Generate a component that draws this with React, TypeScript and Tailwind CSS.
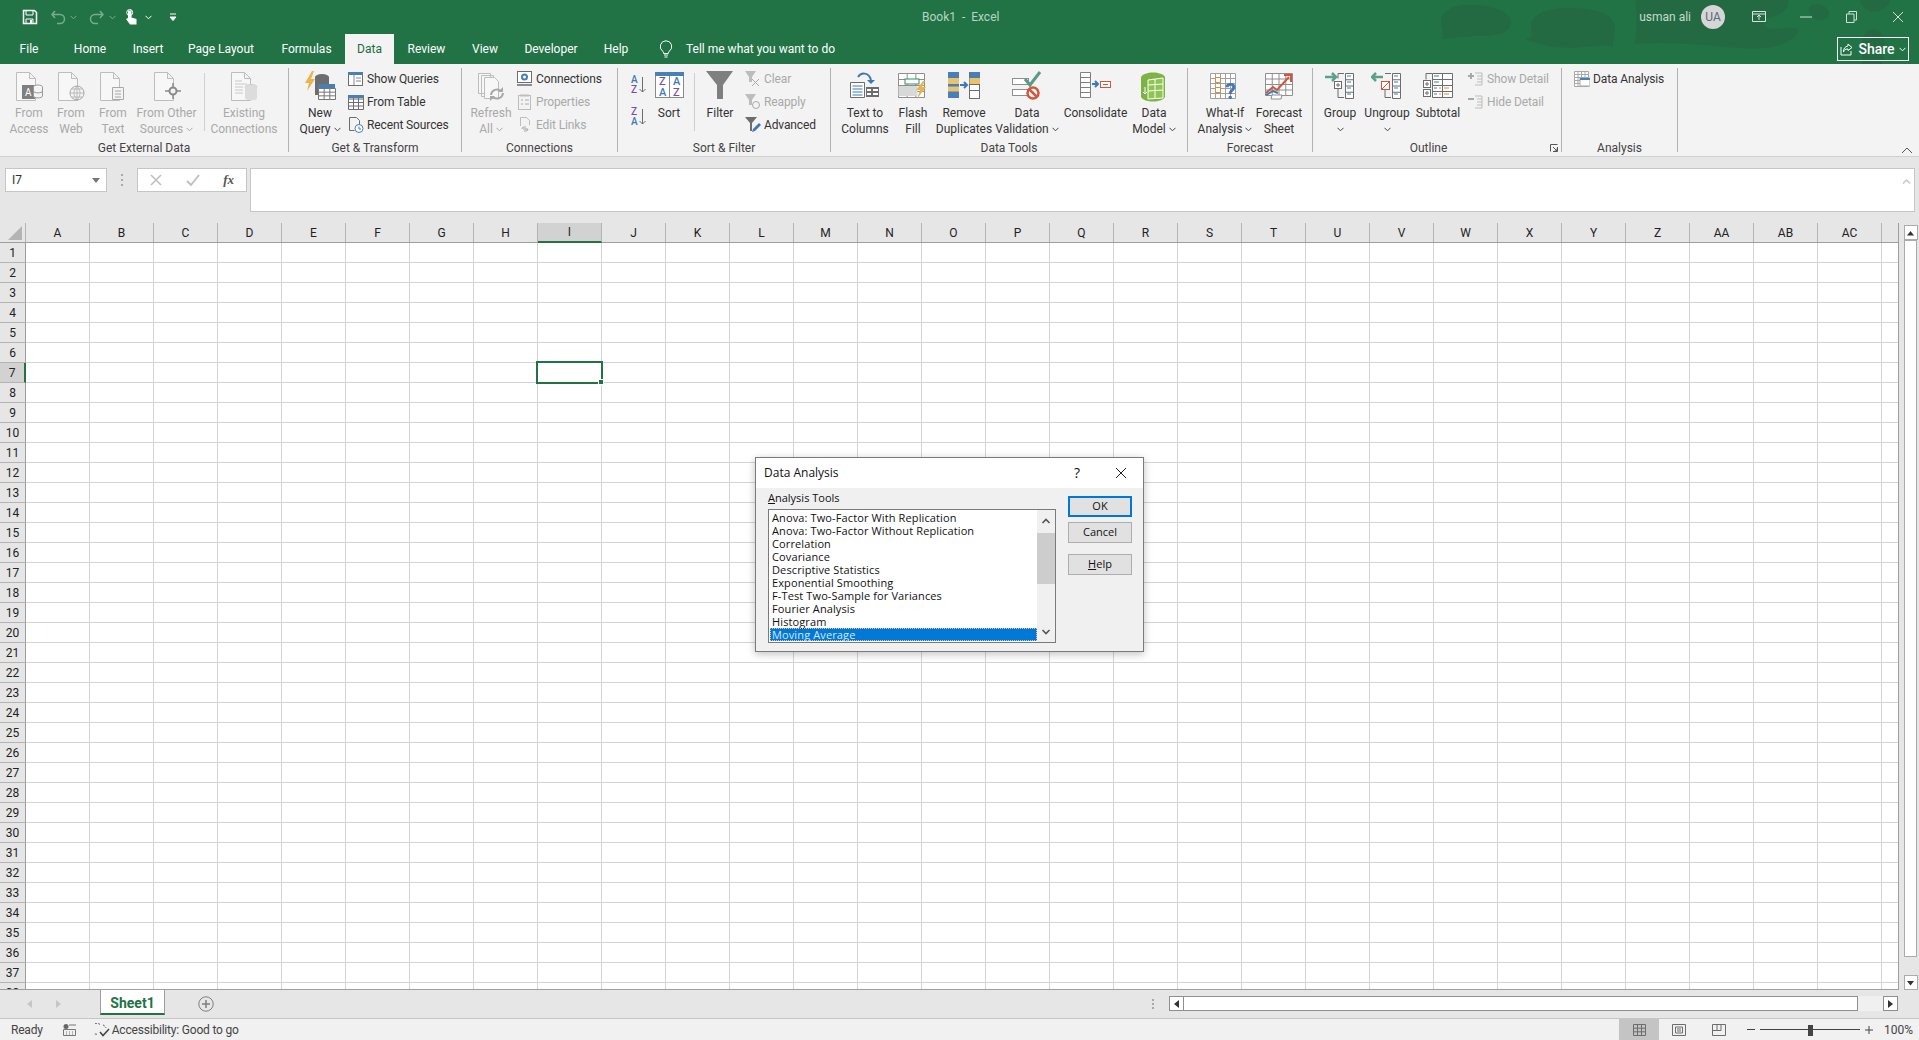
import React from "react";

const GRAY = "#bdbdbd";
const DARK = "#6d6d6d";

const columns = "A B C D E F G H I J K L M N O P Q R S T U V W X Y Z AA AB AC".split(" ");
const rows = Array.from({ length: 38 }, (_, i) => i + 1);
const tools = [
  "Anova: Two-Factor With Replication",
  "Anova: Two-Factor Without Replication",
  "Correlation",
  "Covariance",
  "Descriptive Statistics",
  "Exponential Smoothing",
  "F-Test Two-Sample for Variances",
  "Fourier Analysis",
  "Histogram",
  "Moving Average",
];

function Chev({ color = "#444444" }: { color?: string }) {
  return (
    <svg width="7" height="5" viewBox="0 0 7 5" className="inline-block">
      <path d="M0.5 0.8 3.5 3.8 6.5 0.8" fill="none" stroke={color} strokeWidth="1" />
    </svg>
  );
}

function Icon({ children, size = 32 }: { children: React.ReactNode; size?: number }) {
  return (
    <svg width={size} height={size} viewBox={`0 0 ${size} ${size}`} className="shrink-0" fill="none">
      {children}
    </svg>
  );
}

function Doc({ c = GRAY }: { c?: string }) {
  return <path d="M3.5 1.5h13l6 6v22h-19zM16.5 1.5v6h6" stroke={c} fill="#f7f7f7" />;
}

function BigButton({
  icon,
  label,
  w,
  off,
  chev,
  chevAlone,
}: {
  icon: React.ReactNode;
  label: string[];
  w: number;
  off?: boolean;
  chev?: boolean;
  chevAlone?: boolean;
}) {
  const color = off ? "text-[#a9a9a9]" : "text-[#333333]";
  return (
    <div className={`flex flex-col items-center whitespace-nowrap text-xs leading-4 ${color}`} style={{ width: w }}>
      <div className="flex h-[38px] items-start justify-center pt-[4px]">{icon}</div>
      {label.map((line, i) => (
        <div key={line} className="flex items-center gap-[3px]">
          {line}
          {chev && i === label.length - 1 && <Chev color={off ? "#a9a9a9" : "#444444"} />}
        </div>
      ))}
      {chevAlone && (
        <div className="flex h-4 items-center">
          <Chev />
        </div>
      )}
    </div>
  );
}

function SmallButton({ icon, label, off }: { icon: React.ReactNode; label: string; off?: boolean }) {
  return (
    <div className={`flex h-[23px] items-center whitespace-nowrap text-xs tracking-[-0.12px] ${off ? "text-[#a9a9a9]" : "text-[#333333]"}`}>
      <div className="w-[19px]">{icon}</div>
      {label}
    </div>
  );
}

function Group({
  title,
  w,
  children,
  extra,
}: {
  title: string;
  w: number;
  children: React.ReactNode;
  extra?: React.ReactNode;
}) {
  return (
    <div className="relative mt-1 flex h-[84px] shrink-0 flex-col border-r border-[#b3b3b3]" style={{ width: w }}>
      <div className="-mt-px flex h-[73px]">{children}</div>
      <div className={`h-3 text-center text-xs leading-4 text-[#444444] ${extra ? "pr-[17px]" : ""}`}>{title}</div>
      {extra}
    </div>
  );
}

function ThinSep({ ml, mr }: { ml: string; mr: string }) {
  return <div className={`${ml} ${mr} mt-[6px] h-[58px] w-px bg-[#d0d0d0]`} />;
}

const TabNames: [string, number][] = [
  ["File", 58],
  ["Home", 64],
  ["Insert", 52],
  ["Page Layout", 94],
  ["Formulas", 77],
  ["Data", 49],
  ["Review", 65],
  ["View", 52],
  ["Developer", 80],
  ["Help", 50],
];

function TitleBar() {
  return (
    <div className="relative h-16 bg-[#217346] text-white">
      <svg width="519" height="64" viewBox="0 0 519 64" className="absolute right-0 top-0" fill="#236a42">
        <path d="M41 22c0-12 14-18 32-17 18 0 38 6 38 17s-14 14-30 14c-14 0-24 1-40 3 4-4 0-10 0-17z" />
        <path d="M131 26c0-10 12-18 38-18s46 6 46 20c0 8-2 12-2 19-10-3-20-1-38 1-16 0-32-2-50-9 10-1 6-6 6-13z" />
        <path d="M236 0h152c2 10-8 16-22 18-4 10-4 12 30 10 6 2 0 14-24 19-30 6-80-8-138-3 4-8 2-24 2-44z" />
        <path d="M410 6c6-4 14-2 18 4s-2 10-8 10-14-8-10-14zM460 0h30c-2 10-16 14-22 10-4-2-8-6-8-10zM462 40c4-14 18-14 22-2 2 6 0 18-2 26h-20z" />
      </svg>
      <div className="relative flex h-[34px] items-center">
        <div className="ml-[22px] flex items-center">
          <Icon size={16}>
            <path d="M1.500 1.500h11l2 2v11h-13z" stroke="#fff" strokeWidth="1.500" />
            <path d="M4 2v4h7V2M4 15v-5h7v5" stroke="#fff" />
            <rect x="8" y="11" width="2" height="3" fill="#fff" />
          </Icon>
          <div className="ml-3 flex items-center gap-1 opacity-40">
            <Icon size={16}>
              <path d="M5 2 2 5.500 5 9M2.500 5.500H10a4 4 0 0 1 0 9H7" stroke="#fff" strokeWidth="1.500" />
            </Icon>
            <Chev color="#fff" />
          </div>
          <div className="ml-3 flex items-center gap-1 opacity-40">
            <Icon size={16}>
              <path d="M11 2l3 3.500L11 9M13.500 5.500H6a4 4 0 0 0 0 9h3" stroke="#fff" strokeWidth="1.500" />
            </Icon>
            <Chev color="#fff" />
          </div>
          <div className="ml-2 flex items-center gap-[5px]">
            <Icon size={16}>
              <path d="M4 1.500h3.500v7l5 1.500v5.500H6L2 10l2-1z" fill="#fff" />
              <circle cx="5.700" cy="3.500" r="3" stroke="#fff" />
            </Icon>
            <Chev color="#fff" />
          </div>
          <svg width="8" height="8" viewBox="0 0 8 8" className="ml-[17px]">
            <path d="M1 1h6M1 4h6L4 7.500z" stroke="#fff" fill="#fff" strokeWidth="1" />
          </svg>
        </div>
        <div className="absolute left-[922px] top-[9px] whitespace-pre text-xs text-[#b6d5c4]">Book1  -  Excel</div>
        <div className="absolute right-[228px] top-[9px] text-xs text-[#c3dccf]">usman ali</div>
        <div className="absolute left-[1701px] top-[5px] flex h-6 w-6 items-center justify-center rounded-full bg-[#d6d6d6] text-xs text-[#5a6a7a]">
          UA
        </div>
        <div className="ml-auto flex items-center">
          <svg width="14" height="12" viewBox="0 0 14 12" fill="none" className="mr-[34px]">
            <path d="M.5.5h13v10H.5zM.5 3h13M7 9V4.500M5 6l2-2 2 2" stroke="#d7e6dd" />
          </svg>
          <svg width="12" height="2" viewBox="0 0 12 2" className="mr-[34px]">
            <path d="M0 1h12" stroke="#cfe0d6" />
          </svg>
          <svg width="11" height="12" viewBox="0 0 11 12" fill="none" className="mr-[35px]">
            <path d="M.5 3h7.500v8.500H.5zM3 3V.5h7.500V9H8" stroke="#cfe0d6" />
          </svg>
          <svg width="12" height="12" viewBox="0 0 12 12" className="mr-[15px]">
            <path d="M1 1l10 10M11 1 1 11" stroke="#cfe0d6" />
          </svg>
        </div>
      </div>
      <div className="relative flex h-[30px] items-stretch text-xs">
        {TabNames.map(([name, w]) => (
          <div
            key={name}
            style={{ width: w }}
            className={`flex items-center justify-center ${name === "Data" ? "bg-[#f3f3f3] text-[#1e6b41]" : "text-white"}`}
          >
            {name}
          </div>
        ))}
        <svg width="14" height="18" viewBox="0 0 14 18" fill="none" className="ml-[18px] mt-[6px]">
          <path d="M7 .8a5.700 5.700 0 0 0-3.400 10.300c.8.8 1 1.400 1 2.400h4.800c0-1 .2-1.600 1-2.400A5.700 5.700 0 0 0 7 .8zM5 15h4M5.500 17h3" stroke="#fff" />
        </svg>
        <div className="ml-[13px] flex items-center text-white">Tell me what you want to do</div>
        <div className="absolute right-[10px] top-[3px] flex h-6 w-[72px] items-center justify-center gap-1 border border-white text-sm font-medium">
          <svg width="14" height="14" viewBox="0 0 14 14" fill="none">
            <path d="M8 2l4 3.500L8 8.500V7C5 7 4 8 3.500 10 3.500 6.500 5 4.500 8 4zM1 5v8h10V9" stroke="#fff" />
          </svg>
          Share
          <Chev color="#fff" />
        </div>
      </div>
    </div>
  );
}

function GridSheet({ c = GRAY, x = 0, y = 0, w = 24, h = 24, cols = 4, rws = 4 }: any) {
  const lines: string[] = [`M${x + 0.5} ${y + 0.5}h${w}v${h}h-${w}z`];
  for (let i = 1; i < cols; i++) lines.push(`M${x + 0.5 + (w * i) / cols} ${y}v${h}`);
  for (let i = 1; i < rws; i++) lines.push(`M${x} ${y + 0.5 + (h * i) / rws}h${w}`);
  return <path d={lines.join("")} stroke={c} fill="#fff" />;
}

function SortSmall({ top, bottom, mt }: { top: string; bottom: string; mt: string }) {
  const a = top === "A" ? "#3f78b8" : "#7a4bb0";
  const b = top === "A" ? "#7a4bb0" : "#3f78b8";
  return (
    <svg width="16" height="22" viewBox="0 0 16 22" className={`${mt} ml-[3px]`} fontFamily="Roboto" fontSize="10" fontWeight="500">
      <text x="0" y="9" fill={a}>{top}</text>
      <text x="0" y="19" fill={b}>{bottom}</text>
      <path d="M11.500 3v15M8.500 15l3 3 3-3" stroke={DARK} fill="none" />
    </svg>
  );
}

function Ribbon() {
  return (
    <div className="relative flex h-[93px] border-b border-[#d0d0d0] bg-[#f3f3f3]">
      <Group title="Get External Data" w={289}>
        <div className="ml-2 flex">
          <BigButton
            w={42}
            off
            label={["From", "Access"]}
            icon={
              <Icon>
                <Doc />
                <rect x="9" y="14" width="13" height="14" fill="#7f7f7f" />
                <text x="12" y="25" fontSize="10" fontFamily="Roboto" fill="#fff">A</text>
                <ellipse cx="25" cy="16" rx="4.500" ry="2" fill="#fff" stroke="#999" />
                <path d="M20.500 16v9c0 2.500 9 2.500 9 0v-9M20.500 20c0 2.500 9 2.500 9 0" stroke="#999" fill="#f3f3f3" />
              </Icon>
            }
          />
          <BigButton
            w={42}
            off
            label={["From", "Web"]}
            icon={
              <Icon>
                <Doc />
                <circle cx="22" cy="22" r="7" stroke="#a8a8a8" fill="#f3f3f3" />
                <path d="M15 22h14M22 15v14M17 18h10M17 26h10M22 15c-4 4-4 10 0 14M22 15c4 4 4 10 0 14" stroke="#a8a8a8" strokeWidth=".7" />
              </Icon>
            }
          />
          <BigButton
            w={42}
            off
            label={["From", "Text"]}
            icon={
              <Icon>
                <Doc />
                <path d="M15.500 16.500h11v12h-11zM18 20h6M18 23h6M18 26h6" stroke="#a8a8a8" fill="#f3f3f3" />
              </Icon>
            }
          />
          <BigButton
            w={65}
            off
            chev
            label={["From Other", "Sources"]}
            icon={
              <Icon>
                <Doc />
                <circle cx="22" cy="20" r="3.500" stroke="#8a8a8a" strokeWidth="2" fill="#f3f3f3" />
                <path d="M22 12v4M22 24v4M14 20h4M26 20h4" stroke="#8a8a8a" strokeWidth="1.500" />
              </Icon>
            }
          />
          <ThinSep ml="ml-[5px]" mr="mr-1" />
          <BigButton
            w={70}
            off
            label={["Existing", "Connections"]}
            icon={
              <Icon>
                <Doc />
                <path d="M7 10h7M7 13h12M7 16h8M7 19h8M7 22h8" stroke="#c8c8c8" />
                <ellipse cx="23" cy="16" rx="6" ry="2.500" fill="#dcdcdc" stroke="#cfcfcf" />
                <path d="M17 16v11c0 3 12 3 12 0V16z" fill="#dcdcdc" />
              </Icon>
            }
          />
        </div>
      </Group>
      <Group title="Get & Transform" w={173}>
        <div className="ml-[7px] flex">
          <BigButton
            w={48}
            chev
            label={["New", "Query"]}
            icon={
              <Icon>
                <path d="M8 0 1 12h4L3 20l8-12H7l3-8z" fill="#eab34e" />
                <ellipse cx="18" cy="6" rx="7" ry="3" fill="#6d6d6d" />
                <path d="M11 6v18h14V6z" fill="#6d6d6d" />
                <rect x="14" y="13" width="17" height="15" fill="#4a7fb5" />
                <GridSheet c="#777" x={14} y={17} w={17} h={11} cols={3} rws={3} />
              </Icon>
            }
          />
          <div className="ml-1 flex flex-col">
            <SmallButton
              label="Show Queries"
              icon={
                <Icon size={16}>
                  <rect x=".5" y="1.500" width="14" height="13" stroke="#6d6d6d" fill="#fff" />
                  <rect x="0" y="1" width="15" height="3" fill="#4a7fb5" />
                  <path d="M6 4v10M8 7h5M8 10h5" stroke="#888" />
                </Icon>
              }
            />
            <SmallButton
              label="From Table"
              icon={
                <Icon size={16}>
                  <GridSheet c="#6d6d6d" x={0} y={1} w={15} h={14} cols={3} rws={4} />
                  <rect x="0" y="1" width="15.500" height="3" fill="#4a7fb5" />
                </Icon>
              }
            />
            <SmallButton
              label="Recent Sources"
              icon={
                <Icon size={16}>
                  <path d="M1.500.5h7l3 3v5M1.500.5v13h5" stroke="#6d6d6d" />
                  <circle cx="11" cy="11.500" r="4" fill="#fff" stroke="#4a7fb5" />
                  <path d="M11 9.500v2.500h2" stroke="#4a7fb5" />
                </Icon>
              }
            />
          </div>
        </div>
      </Group>
      <Group title="Connections" w={156}>
        <div className="ml-2 flex">
          <BigButton
            w={42}
            off
            chev
            label={["Refresh", "All"]}
            icon={
              <Icon>
                <path d="M3.500 2.500h12v20h-12zM6.500 4.500h12v21h-12z" stroke={GRAY} fill="#f7f7f7" />
                <path d="M9.500 6.500h10l4 4v17h-14z" stroke={GRAY} fill="#f7f7f7" />
                <path d="M16 24a6 6 0 0 1 10-4M28 22a6 6 0 0 1-10 4" stroke="#a8a8a8" strokeWidth="2" />
                <path d="M28 16v5h-5zM15 30v-5h5z" fill="#a8a8a8" />
              </Icon>
            }
          />
          <div className="ml-[5px] flex flex-col">
            <SmallButton
              label="Connections"
              icon={
                <Icon size={16}>
                  <rect x=".5" y=".5" width="14" height="11" stroke="#6d6d6d" fill="#fff" />
                  <path d="M0 14h15" stroke="#6d6d6d" strokeWidth="1.500" />
                  <circle cx="7.500" cy="6" r="2.500" stroke="#4a7fb5" strokeWidth="2" />
                </Icon>
              }
            />
            <SmallButton
              off
              label="Properties"
              icon={
                <Icon size={16}>
                  <rect x="1.500" y="1.500" width="12" height="14" stroke={GRAY} />
                  <path d="M3 1.500h9" stroke={GRAY} strokeWidth="2" />
                  <path d="M4 6h2M8 6h4M4 10h2M8 10h4" stroke="#a8a8a8" />
                </Icon>
              }
            />
            <SmallButton
              off
              label="Edit Links"
              icon={
                <Icon size={16}>
                  <path d="M3.500 9V.5h6l3 3V8" stroke={GRAY} />
                  <path d="M5 12a2 2 0 0 1 2-2h2M11 12a2 2 0 0 1-2 2H7M8 12h3M6 12h3" stroke="#a8a8a8" />
                </Icon>
              }
            />
          </div>
        </div>
      </Group>
      <Group title="Sort & Filter" w={213}>
        <div className="ml-[10px] flex">
          <div className="flex w-6 flex-col">
            <SortSmall mt="mt-[7px]" top="A" bottom="Z" />
            <div className="h-[5px]" />
            <SortSmall mt="mt-[5px]" top="Z" bottom="A" />
          </div>
          <BigButton
            w={34}
            label={["Sort"]}
            icon={
              <svg width="29" height="28" viewBox="0 0 29 28" fontFamily="Roboto" fontSize="11" fontWeight="500">
                <rect x=".5" y="1.500" width="28" height="25" stroke="#8a8a8a" fill="#fff" />
                <rect x="0" y="1" width="29" height="4" fill="#4a7fb5" />
                <path d="M14.500 5v21" stroke="#8a8a8a" />
                <text x="4" y="14" fill="#7a4bb0">Z</text>
                <text x="4" y="25" fill="#3f78b8">A</text>
                <text x="18" y="14" fill="#3f78b8">A</text>
                <text x="18" y="25" fill="#7a4bb0">Z</text>
              </svg>
            }
          />
          <ThinSep ml="ml-2" mr="mr-[9px]" />
          <BigButton
            w={32}
            label={["Filter"]}
            icon={
              <svg width="28" height="28" viewBox="0 0 28 28">
                <path d="M0 0h27L17 14v14h-6V14z" fill="#7f7f7f" />
              </svg>
            }
          />
          <div className="ml-[9px] flex flex-col">
            <SmallButton
              off
              label="Clear"
              icon={
                <Icon size={16}>
                  <path d="M0 0h11L7 6v5H4V6z" fill="#bdbdbd" />
                  <path d="M7 8l7 7M14 8l-7 7" stroke="#a8a8a8" />
                </Icon>
              }
            />
            <SmallButton
              off
              label="Reapply"
              icon={
                <Icon size={16}>
                  <path d="M0 0h11L7 6v5H4V6z" fill="#bdbdbd" />
                  <circle cx="11" cy="11" r="3.500" stroke="#a8a8a8" />
                </Icon>
              }
            />
            <SmallButton
              label="Advanced"
              icon={
                <Icon size={16}>
                  <path d="M0 0h12L7 6v8H5V6z" fill="#6d6d6d" />
                  <path d="M7 15l1-3 6-6 2 2-6 6z" fill="#3f78b8" />
                </Icon>
              }
            />
          </div>
        </div>
      </Group>
      <Group title="Data Tools" w={357}>
        <div className="ml-1 flex">
          <BigButton
            w={60}
            label={["Text to", "Columns"]}
            icon={
              <Icon>
                <path d="M1.500 11.500h14v15h-14z" stroke="#6d6d6d" fill="#fff" />
                <path d="M3.500 15h10M3.500 18h10M3.500 21h10M3.500 24h10" stroke="#3f78b8" />
                <rect x="17" y="16" width="13" height="10" fill="#6d6d6d" />
                <path d="M18 18h4v2h-4zM24 18h5v2h-5zM18 22h4v2h-4zM24 22h5v2h-5z" fill="#fff" />
                <path d="M9 6c3-5 11-5 13 3" stroke="#3f78b8" strokeWidth="2" />
                <path d="M18 9h8l-4 4z" fill="#3f78b8" />
              </Icon>
            }
          />
          <BigButton
            w={36}
            label={["Flash", "Fill"]}
            icon={
              <Icon>
                <GridSheet c="#8f8f8f" x={1} y={2} w={26} h={24} cols={3} rws={4} />
                <rect x="8" y="8" width="14" height="5" fill="#fff" stroke="#2f8f5e" />
                <rect x="1.500" y="15" width="19" height="10" fill="#d8d8d8" />
                <path d="M26 10l-7 9h4l-3 9 9-12h-4l3-6z" fill="#eab34e" />
              </Icon>
            }
          />
          <BigButton
            w={66}
            label={["Remove", "Duplicates"]}
            icon={
              <Icon>
                <rect x="0" y="1" width="11" height="26" fill="#4a7fb5" />
                <rect x="0" y="7" width="11" height="6" fill="#e9c26f" />
                <rect x="0" y="15.500" width="11" height="5" fill="#e9c26f" />
                <rect x="21.500" y="1.500" width="10" height="26" fill="#fff" stroke="#6d6d6d" />
                <rect x="21.500" y="1" width="10.500" height="6" fill="#4a7fb5" />
                <rect x="21.500" y="7" width="10.500" height="6" fill="#e9c26f" />
                <path d="M22 13.500h10M22 19.500h10" stroke="#6d6d6d" />
                <path d="M12 14h6M16 11l3 3-3 3" stroke="#3f78b8" strokeWidth="2" />
              </Icon>
            }
          />
          <BigButton
            w={60}
            chev
            label={["Data", "Validation"]}
            icon={
              <Icon>
                <rect x="1.500" y="7.500" width="16" height="6" stroke="#8f8f8f" fill="#fff" />
                <rect x="1.500" y="18.500" width="16" height="6" stroke="#8f8f8f" fill="#fff" />
                <path d="M14 8l5 6L29 1" stroke="#5a9a86" strokeWidth="3" />
                <circle cx="22" cy="22" r="5.500" stroke="#d1573c" strokeWidth="2.500" fill="#fff" />
                <path d="M18 18l8 8" stroke="#d1573c" strokeWidth="2.500" />
              </Icon>
            }
          />
          <BigButton
            w={77}
            label={["Consolidate"]}
            icon={
              <Icon>
                <GridSheet c="#7f7f7f" x={0} y={1} w={10} h={25} cols={1} rws={5} />
                <path d="M12 13h5M15 10l3 3-3 3" stroke="#3f78b8" strokeWidth="2" />
                <rect x="20.500" y="10.500" width="10" height="6" stroke="#d1573c" fill="#fff" />
                <path d="M23 13.500h5" stroke="#d1573c" />
              </Icon>
            }
          />
          <BigButton
            w={40}
            chev
            label={["Data", "Model"]}
            icon={
              <Icon>
                <path d="M3 6c3-6 21-6 24 0v20c-3 6-21 6-24 0z" fill="#7cb342" />
                <path d="M10 9l15-2v20l-15 1z" fill="#8ec450" stroke="#fff" />
                <path d="M17 8v20M10 14l15-1M10 20l15-1" stroke="#fff" />
                <path d="M7 16v7M5 21l2 2 2-2" stroke="#fff" />
              </Icon>
            }
          />
        </div>
      </Group>
      <Group title="Forecast" w={125}>
        <div className="ml-2 flex">
          <BigButton
            w={58}
            chev
            label={["What-If", "Analysis"]}
            icon={
              <Icon>
                <GridSheet c="#a0a0a0" x={1} y={2} w={25} h={25} cols={5} rws={5} />
                <rect x="6.500" y="6.500" width="5" height="5" fill="#fff" stroke="#e08a3a" />
                <rect x="6.500" y="16.500" width="5" height="5" fill="#fff" stroke="#e08a3a" />
                <text x="16" y="28" fontSize="22" fontWeight="700" fontFamily="Roboto" fill="#3f78b8">?</text>
              </Icon>
            }
          />
          <BigButton
            w={50}
            label={["Forecast", "Sheet"]}
            icon={
              <Icon>
                <GridSheet c="#8f8f8f" x={2} y={2} w={27} h={22} cols={4} rws={4} />
                <path d="M3 22l7-6 4 3 12-13" stroke="#d1573c" strokeWidth="2" />
                <path d="M21 4h7v7" stroke="#d1573c" strokeWidth="2" />
                <path d="M3 24l7-4 5 2" stroke="#3f78b8" strokeWidth="2" />
                <path d="M9 24h10l-1 4H8z" fill="#fff" stroke="#8f8f8f" />
              </Icon>
            }
          />
        </div>
      </Group>
      <Group
        title="Outline"
        w={249}
        extra={
          <svg width="8" height="8" viewBox="0 0 8 8" fill="none" className="absolute bottom-0 right-[3px]">
            <path d="M.5 7.500v-7h7M7.500 3v4.500H3M3 3l4 4M4.500 7H7V4.500" stroke="#555" />
          </svg>
        }
      >
        <div className="ml-[5px] flex">
          <BigButton
            w={44}
            chevAlone
            label={["Group"]}
            icon={
              <Icon>
                <path d="M1 6h10M8 2l4 4-4 4" stroke="#5aa08c" strokeWidth="2.500" />
                <path d="M14 2.500h6M14 2.500v5M14 17v9.500h6" stroke="#6d6d6d" />
                <rect x="10.500" y="10.500" width="7" height="7" stroke="#6d6d6d" fill="#fff" />
                <path d="M12 14h4M14 12v4" stroke="#6d6d6d" />
                <GridSheet c="#6d6d6d" x={21} y={2} w={8} h={25} cols={1} rws={4} />
                <path d="M23 5h4M23 11h4M23 17h4M23 23h4" stroke="#3f78b8" />
              </Icon>
            }
          />
          <BigButton
            w={50}
            chevAlone
            label={["Ungroup"]}
            icon={
              <Icon>
                <path d="M12 6H2M5 2 1 6l4 4" stroke="#5aa08c" strokeWidth="2.500" />
                <path d="M14 2.500h6M14 17v9.500h6" stroke="#6d6d6d" />
                <rect x="10.500" y="10.500" width="8" height="8" stroke="#d1573c" fill="#fff" />
                <path d="M11 18l7-7" stroke="#d1573c" />
                <GridSheet c="#6d6d6d" x={21} y={2} w={8} h={25} cols={1} rws={4} />
                <path d="M23 5h4M23 11h4M23 17h4M23 23h4" stroke="#3f78b8" />
              </Icon>
            }
          />
          <BigButton
            w={52}
            label={["Subtotal"]}
            icon={
              <Icon>
                <path d="M4 2.500h6M4 2.500v6" stroke="#6d6d6d" />
                <rect x="1.500" y="9.500" width="7" height="7" stroke="#6d6d6d" fill="#fff" />
                <rect x="1.500" y="18.500" width="7" height="7" stroke="#6d6d6d" fill="#fff" />
                <path d="M3 13h4M5 11v4M3 22h4M5 20v4" stroke="#6d6d6d" />
                <GridSheet c="#6d6d6d" x={10} y={2} w={20} h={24} cols={2} rws={4} />
                <path d="M12 5h5M12 11h5M12 17h3M12 23h3" stroke="#3f78b8" />
                <path d="M22 17h5M22 23h5M17 17h2M17 23h2" stroke="#e08a3a" />
              </Icon>
            }
          />
          <div className="ml-1 flex flex-col">
            <SmallButton
              off
              label="Show Detail"
              icon={
                <Icon size={16}>
                  <path d="M0 5h6M3 2v6" stroke="#a8a8a8" strokeWidth="2" />
                  <path d="M7 2h7M9 5h5M9 8h5M9 11h5M7 14h7M14 2v12" stroke={GRAY} />
                </Icon>
              }
            />
            <SmallButton
              off
              label="Hide Detail"
              icon={
                <Icon size={16}>
                  <path d="M0 5h6" stroke="#a8a8a8" strokeWidth="2" />
                  <path d="M7 2h7M9 5h5M9 8h5M9 11h5M7 14h7M14 2v12" stroke={GRAY} />
                </Icon>
              }
            />
          </div>
        </div>
      </Group>
      <Group title="Analysis" w={116}>
        <div className="ml-3">
          <SmallButton
            label="Data Analysis"
            icon={
              <Icon size={16}>
                <GridSheet c="#a8a8a8" x={0} y={0} w={14} h={15} cols={4} rws={5} />
                <rect x="6" y="7" width="10" height="8" fill="#fff" stroke="#a8a8a8" />
                <rect x="6" y="7" width="10" height="2" fill="#4a7fb5" />
              </Icon>
            }
          />
        </div>
      </Group>
      <svg width="12" height="7" viewBox="0 0 12 7" fill="none" className="absolute right-[6px] top-[83px]">
        <path d="M1 6l5-5 5 5" stroke="#555" />
      </svg>
    </div>
  );
}

function FormulaBar() {
  return (
    <div className="flex h-[66px] items-start bg-[#e6e6e6] pl-[5px] pr-[4px] pt-[11px]">
      <div className="flex h-6 w-[102px] items-center justify-between border border-[#c6c6c6] bg-white pl-[6px] pr-[6px] text-xs text-[#333333]">
        I7
        <svg width="8" height="5" viewBox="0 0 8 5">
          <path d="M0 0h8L4 5z" fill="#777" />
        </svg>
      </div>
      <div className="flex h-6 w-[30px] items-center justify-center">
        <svg width="2" height="12" viewBox="0 0 2 12">
          <path d="M0 0h2v2H0zM0 5h2v2H0zM0 10h2v2H0z" fill="#a8a8a8" />
        </svg>
      </div>
      <div className="flex h-6 w-[110px] items-center justify-between border border-[#c6c6c6] bg-white px-3">
        <svg width="12" height="12" viewBox="0 0 12 12">
          <path d="M1 1l10 10M11 1 1 11" stroke="#bdbdbd" strokeWidth="1.500" />
        </svg>
        <svg width="14" height="12" viewBox="0 0 14 12" fill="none">
          <path d="M1 7l4 4 8-10" stroke="#bdbdbd" strokeWidth="1.800" />
        </svg>
        <span className="font-['Liberation_Serif',serif] text-[13px] font-bold italic text-[#555555]">fx</span>
      </div>
      <div className="relative ml-[3px] h-[44px] flex-1 border border-[#c6c6c6] bg-white">
        <svg width="9" height="7" viewBox="0 0 9 7" className="absolute right-[3px] top-[9px]">
          <path d="M1 5.500 4.500 2 8 5.500" fill="none" stroke="#c8c8c8" strokeWidth="1.500" />
        </svg>
      </div>
    </div>
  );
}

function ScrollBtn({ d }: { d: string }) {
  return (
    <div className="flex h-[15px] w-[14px] shrink-0 items-center justify-center border border-[#ababab] bg-white">
      <svg width="9" height="8" viewBox="0 0 9 8">
        <path d={d} fill="#333" />
      </svg>
    </div>
  );
}

function Sheet() {
  return (
    <div className="flex h-[767px] bg-[#e6e6e6]">
      <div className="relative flex w-[1899px] flex-col overflow-hidden border-b border-r border-[#9e9e9e] bg-white">
        <div className="flex h-5 shrink-0 border-b border-[#9e9e9e] bg-[#e6e6e6]">
          <div className="relative w-[26px] shrink-0 border-r border-[#b4b4b4]">
            <svg width="14" height="14" viewBox="0 0 14 14" className="absolute bottom-[2px] right-[3px]">
              <path d="M14 0v14H0z" fill="#b4b4b4" />
            </svg>
          </div>
          {columns.map((c) => (
            <div
              key={c}
              className={`flex w-16 shrink-0 items-center justify-center border-r border-[#b4b4b4] text-xs text-[#222222] ${
                c === "I" ? "h-[20px] border-b-2 border-b-[#217346] bg-[#d2d2d2]" : ""
              }`}
            >
              {c}
            </div>
          ))}
          <div className="w-16 shrink-0" />
        </div>
        {rows.map((r) => (
          <div key={r} className="flex h-5 shrink-0">
            <div
              className={`flex w-[26px] shrink-0 items-center justify-center border-b border-r pt-px text-xs text-[#222222] ${
                r === 7 ? "border-r-2 border-b-[#b4b4b4] border-r-[#217346] bg-[#d2d2d2]" : "border-b-[#b4b4b4] border-r-[#9e9e9e] bg-[#e6e6e6]"
              }`}
            >
              {r}
            </div>
            {columns.map((c) => (
              <div key={c} className="w-16 shrink-0 border-b border-r border-[#d4d4d4]" />
            ))}
            <div className="w-16 shrink-0 border-b border-[#d4d4d4]" />
          </div>
        ))}
        {/* active cell I7 */}
        <div className="absolute left-[536px] top-[138px] h-[23px] w-[67px] border-2 border-[#217346]">
          <div className="absolute -bottom-[3px] -right-[3px] h-[6px] w-[6px] border border-white bg-[#217346]" />
        </div>
      </div>
      <div className="flex w-5 flex-col items-center pl-[5px] pr-[2px] pt-[2px]">
        <ScrollBtn d="M1 6.500 4.500 2 8 6.500z" />
        <div className="h-[717px] w-full border border-[#ababab] bg-white" />
        <div className="flex-1" />
        <ScrollBtn d="M1 2h7L4.500 6.500z" />
      </div>
    </div>
  );
}

function Tabs() {
  return (
    <div className="flex h-7 items-stretch bg-[#e6e6e6]">
      <div className="flex w-[100px] items-center text-[#c0c0c0]">
        <svg width="5" height="8" viewBox="0 0 5 8" className="ml-[27px]">
          <path d="M5 0v8L0 4z" fill="#c6c6c6" />
        </svg>
        <svg width="5" height="8" viewBox="0 0 5 8" className="ml-[24px]">
          <path d="M0 0v8l5-4z" fill="#c6c6c6" />
        </svg>
      </div>
      <div className="mb-[3px] flex w-[65px] items-center justify-center border-x border-b-2 border-[#9e9e9e] border-b-[#217346] bg-white pt-[2px] text-sm font-bold text-[#217346]">
        Sheet1
      </div>
      <div className="ml-[33px] flex items-center">
        <svg width="16" height="16" viewBox="0 0 16 16" fill="none">
          <circle cx="8" cy="8" r="7.200" stroke="#7f7f7f" />
          <path d="M8 4v8M4 8h8" stroke="#7f7f7f" strokeWidth="1.500" />
        </svg>
      </div>
      <div className="ml-[938px] flex items-center">
        <svg width="2" height="10" viewBox="0 0 2 10">
          <path d="M0 0h2v2H0zM0 4h2v2H0zM0 8h2v2H0z" fill="#a8a8a8" />
        </svg>
      </div>
      <div className="ml-[15px] flex items-center pb-[1px]">
        <div className="flex h-[15px] w-[15px] items-center justify-center border border-[#8f8f8f] bg-white">
          <svg width="5" height="8" viewBox="0 0 5 8">
            <path d="M5 0v8L0 4z" fill="#333" />
          </svg>
        </div>
        <div className="h-[15px] w-[674px] border-y border-r border-[#8f8f8f] bg-white" />
        <div className="h-[15px] w-[25px] bg-[#f0f0f0]" />
        <div className="flex h-[15px] w-[15px] items-center justify-center border border-[#8f8f8f] bg-white">
          <svg width="5" height="8" viewBox="0 0 5 8">
            <path d="M0 0v8l5-4z" fill="#333" />
          </svg>
        </div>
      </div>
    </div>
  );
}

function StatusBar() {
  return (
    <div className="flex h-[22px] items-center border-t border-[#c6c6c6] bg-[#f1f1f1] text-xs text-[#444444]">
      <span className="ml-[11px] tracking-[-0.2px]">Ready</span>
      <svg width="13" height="12" viewBox="0 0 13 12" className="ml-[20px]">
        <circle cx="3" cy="2.500" r="2.500" fill="#666" />
        <path d="M6 1h7M.5 5.500h12v6H.5z" stroke="#777" fill="none" />
        <path d="M3 8h1M6 8h1M9 8h1M3 10h1M6 10h1M9 10h1" stroke="#777" />
      </svg>
      <svg width="16" height="14" viewBox="0 0 16 14" fill="none" className="ml-[18px]">
        <path d="M6 1.500A5.500 5.500 0 1 0 4 11M9 2a5 5 0 0 1 3 3" stroke="#555" strokeDasharray="2 1.200" />
        <path d="M6 9l3 3.500L15 6" stroke="#444" strokeWidth="1.500" />
      </svg>
      <span className="ml-[2px] tracking-[-0.2px]">Accessibility: Good to go</span>
      <div className="ml-auto flex h-full items-center">
        <div className="flex h-full w-10 items-center justify-center bg-[#c4c4c4]">
          <svg width="13" height="12" viewBox="0 0 13 12">
            <path d="M.5.500h12v11H.5zM4.500.5v11M8.500.5v11M.5 4.200h12M.5 7.800h12" stroke="#6d6d6d" fill="none" />
          </svg>
        </div>
        <div className="flex h-full w-10 items-center justify-center">
          <svg width="14" height="12" viewBox="0 0 14 12" fill="none">
            <path d="M.5.5h13v11H.5zM3.500 3h7v6h-7zM5 5h4M5 7h4" stroke="#6d6d6d" />
          </svg>
        </div>
        <div className="flex h-full w-10 items-center justify-center">
          <svg width="14" height="12" viewBox="0 0 14 12" fill="none">
            <path d="M.5.5h13v11H.5zM5 .5v6h4v-6M.5 6.500H5" stroke="#6d6d6d" />
          </svg>
        </div>
        <div className="ml-2 h-px w-2 bg-[#444444]" />
        <div className="relative ml-[5px] flex h-full w-[100px] items-center">
          <div className="h-px w-full bg-[#444444]" />
          <div className="absolute left-[48px] top-[6px] h-[11px] w-[5px] bg-[#444444]" />
        </div>
        <svg width="8" height="8" viewBox="0 0 8 8" className="ml-[5px]">
          <path d="M0 4h8M4 0v8" stroke="#444" />
        </svg>
        <span className="ml-[10px] mr-[6px] w-[30px] text-right">100%</span>
      </div>
    </div>
  );
}

function Dialog() {
  return (
    <div className="absolute left-[755px] top-[457px] h-[195px] w-[389px] border border-[#7a7a7a] bg-[#f0f0f0] font-['Open_Sans',sans-serif] text-[11px] text-[#111111] shadow-[0_2px_8px_rgba(0,0,0,0.25)]">
      <div className="flex h-[30px] items-center bg-white">
        <span className="ml-2 text-xs">Data Analysis</span>
        <span className="ml-auto text-sm">?</span>
        <svg width="12" height="12" viewBox="0 0 12 12" className="ml-[35px] mr-4">
          <path d="M1 1l10 10M11 1 1 11" stroke="#222" />
        </svg>
      </div>
      <div className="flex pl-3">
        <div>
          <div className="flex h-[21px] items-center">
            <span>
              <span className="underline">A</span>nalysis Tools
            </span>
          </div>
          <div className="flex h-[134px] w-[288px] border border-[#7a7a7a] bg-white">
            <div className="w-[268px] pl-[1px] pt-[1px] tracking-[0.12px]">
              {tools.map((t) => (
                <div
                  key={t}
                  className={`flex h-[13px] items-center whitespace-nowrap pl-[2px] leading-[13px] ${
                    t === "Moving Average" ? "bg-[#0078d7] text-[#d5e8fb] outline-1 -outline-offset-1 outline-dotted outline-[#f5c37a]" : ""
                  }`}
                >
                  {t}
                </div>
              ))}
            </div>
            <div className="flex w-[18px] flex-col items-center bg-[#f0f0f0]">
              <svg width="10" height="8" viewBox="0 0 10 8" className="mt-[7px]">
                <path d="M1.500 6 5 2.500 8.500 6" fill="none" stroke="#555" strokeWidth="1.600" />
              </svg>
              <div className="mt-[8px] h-[51px] w-full bg-[#cdcdcd]" />
              <div className="flex-1" />
              <svg width="10" height="8" viewBox="0 0 10 8" className="mb-[6px]">
                <path d="M1.500 2 5 5.500 8.500 2" fill="none" stroke="#555" strokeWidth="1.600" />
              </svg>
            </div>
          </div>
        </div>
        <div className="ml-3 mt-2 flex w-16 flex-col">
          <div className="flex h-[21px] items-center justify-center border-2 border-[#0078d7] bg-[#e1e1e1]">OK</div>
          <div className="mt-[5px] flex h-[21px] items-center justify-center border border-[#adadad] bg-[#e1e1e1]">Cancel</div>
          <div className="mt-[11px] flex h-[21px] items-center justify-center border border-[#adadad] bg-[#e1e1e1]">
            <span>
              <span className="underline">H</span>elp
            </span>
          </div>
        </div>
      </div>
    </div>
  );
}

export default function App() {
  return (
    <div className="relative flex h-[1040px] w-[1919px] flex-col overflow-hidden bg-white font-['Roboto',sans-serif]">
      <TitleBar />
      <Ribbon />
      <FormulaBar />
      <Sheet />
      <Tabs />
      <StatusBar />
      <Dialog />
    </div>
  );
}
